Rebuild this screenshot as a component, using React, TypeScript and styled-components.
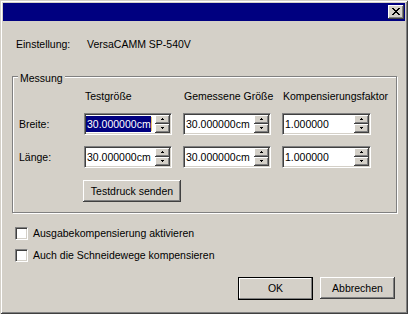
import React from "react";
import styled, { createGlobalStyle } from "styled-components";

const GlobalStyle = createGlobalStyle`
  html, body { margin: 0; padding: 0; background: #d4d0c8; }
  body {
    font-family: "Liberation Sans", Arial, sans-serif;
    font-size: 10.5px;
    color: #000;
  }
  * { box-sizing: border-box; }
`;

const Window = styled.div`
  width: 408px;
  height: 314px;
  padding: 3px;
  background: #d4d0c8;
  box-shadow: inset 1px 1px #d4d0c8, inset -1px -1px #404040,
    inset 2px 2px #fff, inset -2px -2px #808080;
  display: flex;
  flex-direction: column;
`;

const TitleBar = styled.div`
  height: 18px;
  background: #000080;
  display: flex;
  align-items: center;
  justify-content: flex-end;
  padding-right: 1px;
`;

const CaptionButton = styled.div`
  width: 16px;
  height: 14px;
  background: #d4d0c8;
  box-shadow: inset -1px -1px #404040, inset 1px 1px #fff,
    inset -2px -2px #808080;
  display: flex;
  align-items: center;
  justify-content: center;
  padding: 0 1px 1px 0;

  svg { display: block; }
`;

const Client = styled.div`
  flex: 1;
  display: flex;
  flex-direction: column;
  line-height: 13px;
`;

const SettingRow = styled.div`
  display: flex;
  margin: 17px 0 0 13px;

  span:first-child { width: 71px; }
`;

const Group = styled.div`
  position: relative;
  margin: 25px 0 0 9px;
  width: 385px;
  border: 1px solid #808080;
  box-shadow: inset 1px 1px #fff, 1px 1px #fff;
  padding: 12px 0 10px 6px;
  display: flex;
  flex-direction: column;
`;

const Legend = styled.span`
  position: absolute;
  left: 5px;
  top: -5px;
  padding: 0 2px;
  background: #d4d0c8;
`;

const GridRow = styled.div<{ $h: number; $gap?: number }>`
  display: grid;
  grid-template-columns: 54px 88px 88px 89px;
  column-gap: 11px;
  height: ${(p) => p.$h}px;
  margin-top: ${(p) => p.$gap ?? 0}px;
  align-items: center;
`;

const HeaderCell = styled.span`
  padding-left: 1px;
  line-height: 14px;
  white-space: nowrap;
`;

const Field = styled.div`
  height: 22px;
  background: #fff;
  border: 1px solid;
  border-color: #808080 #fff #fff #808080;
  box-shadow: inset 1px 1px #404040, inset -1px -1px #d4d0c8;
  padding: 1px;
  display: flex;
`;

const FieldText = styled.div`
  flex: 1;
  display: flex;
  align-items: center;
  white-space: nowrap;
  overflow: hidden;
`;

const TextRun = styled.span<{ $selected?: boolean }>`
  padding: 0 0 0 1px;
  line-height: 16px;
  background: ${(p) => (p.$selected ? "#000080" : "transparent")};
  color: ${(p) => (p.$selected ? "#fff" : "#000")};
`;

const Caret = styled.span`
  width: 1px;
  height: 14px;
  background: #e8c46a;
`;

const Spin = styled.div`
  width: 15px;
  display: flex;
  flex-direction: column;
`;

const SpinButton = styled.div`
  height: 9px;
  background: #d4d0c8;
  box-shadow: inset -1px -1px #404040, inset 1px 1px #fff,
    inset -2px -2px #808080;
  display: flex;
  align-items: center;
  justify-content: center;
  padding: 0 1px 1px 0;

  svg { display: block; }
`;

const PushButton = styled.button<{ $w: number; $default?: boolean }>`
  width: ${(p) => p.$w}px;
  height: ${(p) => (p.$default ? 23 : 22)}px;
  font: inherit;
  color: #000;
  background: #d4d0c8;
  border: ${(p) => (p.$default ? "1px solid #000" : "none")};
  border-radius: 0;
  padding: 0;
  box-shadow: ${(p) =>
    p.$default
      ? "inset -1px -1px #808080, inset 1px 1px #fff"
      : "inset -1px -1px #404040, inset 1px 1px #fff, inset -2px -2px #808080"};
`;

const TestButton = styled(PushButton)`
  grid-column: 2 / span 2;
  justify-self: start;
  margin-left: -1px;
`;

const CheckList = styled.div`
  display: flex;
  flex-direction: column;
  gap: 9px;
  margin: 14px 0 0 12px;
`;

const CheckRow = styled.label`
  display: flex;
  align-items: center;
  gap: 5px;
  height: 13px;
`;

const CheckBox = styled.span`
  width: 13px;
  height: 13px;
  background: #fff;
  border: 1px solid;
  border-color: #808080 #fff #fff #808080;
  box-shadow: inset 1px 1px #404040, inset -1px -1px #d4d0c8;
`;

const ButtonBar = styled.div`
  display: flex;
  justify-content: flex-end;
  align-items: flex-start;
  gap: 7px;
  margin-top: 15px;
  padding-right: 10px;
`;

const CloseGlyph = () => (
  <svg width="8" height="7" viewBox="0 0 8 7" shapeRendering="crispEdges">
    <path d="M0 0h2v1H0zM6 0h2v1H6zM1 1h2v1H1zM5 1h2v1H5zM2 2h4v1H2zM3 3h2v1H3zM2 4h4v1H2zM1 5h2v1H1zM5 5h2v1H5zM0 6h2v1H0zM6 6h2v1H6z" fill="#000" />
  </svg>
);

const Arrow = ({ down }: { down?: boolean }) => (
  <svg width="3" height="2" viewBox="0 0 3 2" shapeRendering="crispEdges">
    {down ? (
      <path d="M0 0h3v1H0zM1 1h1v1H1z" fill="#000" />
    ) : (
      <path d="M1 0h1v1H1zM0 1h3v1H0z" fill="#000" />
    )}
  </svg>
);

interface SpinFieldProps {
  value: string;
  selected?: boolean;
}

const SpinField = ({ value, selected }: SpinFieldProps) => (
  <Field>
    <FieldText>
      <TextRun $selected={selected}>{value}</TextRun>
      {selected && <Caret />}
    </FieldText>
    <Spin>
      <SpinButton><Arrow /></SpinButton>
      <SpinButton><Arrow down /></SpinButton>
    </Spin>
  </Field>
);

export default function App() {
  return (
    <>
      <GlobalStyle />
      <Window>
        <TitleBar>
          <CaptionButton><CloseGlyph /></CaptionButton>
        </TitleBar>
        <Client>
          <SettingRow>
            <span>Einstellung:</span>
            <span>VersaCAMM SP-540V</span>
          </SettingRow>

          <Group>
            <Legend>Messung</Legend>
            <GridRow $h={14}>
              <span />
              <HeaderCell>Testgröße</HeaderCell>
              <HeaderCell>Gemessene Größe</HeaderCell>
              <HeaderCell>Kompensierungsfaktor</HeaderCell>
            </GridRow>
            <GridRow $h={22} $gap={10}>
              <span>Breite:</span>
              <SpinField value="30.000000cm" selected />
              <SpinField value="30.000000cm" />
              <SpinField value="1.000000" />
            </GridRow>
            <GridRow $h={22} $gap={11}>
              <span>Länge:</span>
              <SpinField value="30.000000cm" />
              <SpinField value="30.000000cm" />
              <SpinField value="1.000000" />
            </GridRow>
            <GridRow $h={22} $gap={12}>
              <span />
              <TestButton $w={98}>Testdruck senden</TestButton>
            </GridRow>
          </Group>

          <CheckList>
            <CheckRow>
              <CheckBox />
              <span>Ausgabekompensierung aktivieren</span>
            </CheckRow>
            <CheckRow>
              <CheckBox />
              <span>Auch die Schneidewege kompensieren</span>
            </CheckRow>
          </CheckList>

          <ButtonBar>
            <PushButton $w={75} $default>OK</PushButton>
            <PushButton $w={75}>Abbrechen</PushButton>
          </ButtonBar>
        </Client>
      </Window>
    </>
  );
}
